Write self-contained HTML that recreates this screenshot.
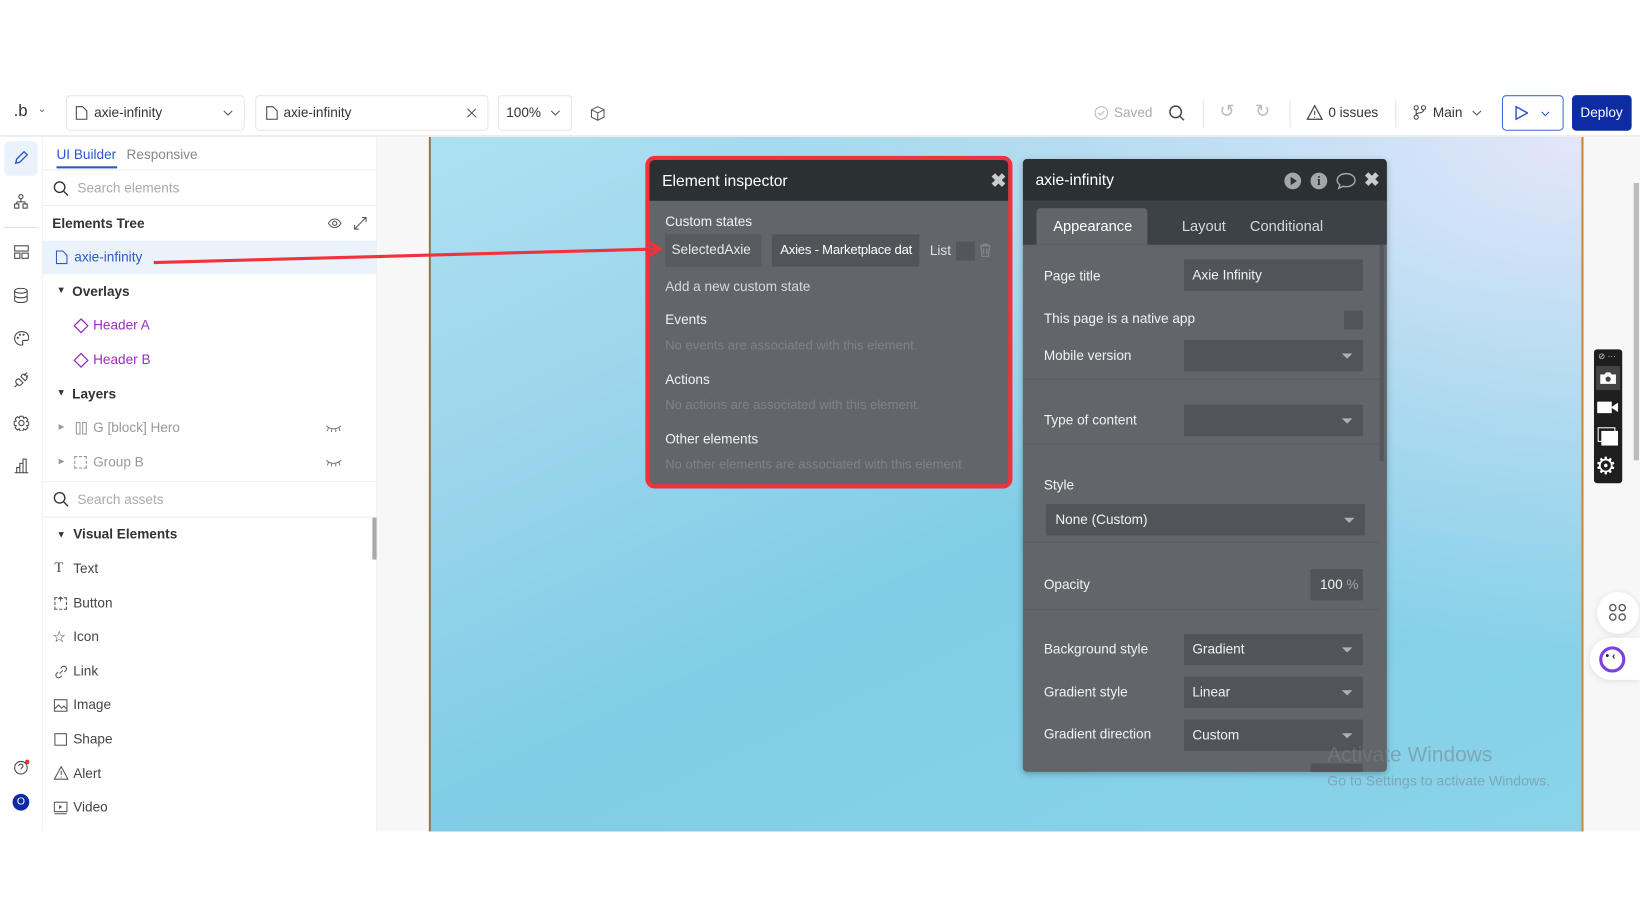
<!DOCTYPE html>
<html><head><meta charset="utf-8"><style>
*{box-sizing:border-box;margin:0;padding:0}
html,body{width:1640px;height:924px;overflow:hidden;background:#fff;font-family:"Liberation Sans",sans-serif}
#w{position:absolute;left:0;top:0;width:1568px;height:883px;transform:scale(1.04592);transform-origin:0 0}
.a{position:absolute}
.t{position:absolute;white-space:nowrap}
.ic{position:absolute}
.box{position:absolute;border:1px solid #e6e6e6;border-radius:4px;background:#fff}
.lbl{position:absolute;font-size:13px;color:#f2f2f2;white-space:nowrap}
.fld{position:absolute;background:#51555a;color:#f2f2f2;font-size:13px;padding-left:8px;line-height:30px;white-space:nowrap}
.dd:after{content:"";position:absolute;right:10px;top:13px;border:5px solid transparent;border-top:5px solid #aeb1b4;border-bottom:0}
.sep{position:absolute;left:0;width:340px;height:1px;background:#585c60}
.side{font-size:13px;color:#444}
</style></head><body><div id="w">
<!-- toolbar -->
<div class="t" style="left:13px;top:98px;font-size:16px;color:#333">.b</div>
<div class="t" style="left:36px;top:99px;font-size:10px;color:#666">⌄</div>
<div class="box" style="left:63px;top:91px;width:171px;height:34px"></div>
<svg class="ic" style="left:72px;top:101px" width="12" height="14" viewBox="0 0 12 14"><path d="M1 1h6l4 4v8H1z" fill="none" stroke="#444"/></svg>
<div class="t" style="left:90px;top:100px;font-size:13px;color:#333">axie-infinity</div>
<svg class="ic" style="left:213px;top:105px" width="10" height="6"><path d="M1 1l4 4 4-4" fill="none" stroke="#555"/></svg>
<div class="box" style="left:244px;top:91px;width:223px;height:34px"></div>
<svg class="ic" style="left:254px;top:101px" width="12" height="14" viewBox="0 0 12 14"><path d="M1 1h6l4 4v8H1z" fill="none" stroke="#444"/></svg>
<div class="t" style="left:271px;top:100px;font-size:13px;color:#333">axie-infinity</div>
<svg class="ic" style="left:446px;top:103px" width="10" height="10"><path d="M1 1l8 8M9 1l-8 8" stroke="#555"/></svg>
<div class="box" style="left:476px;top:91px;width:71px;height:34px"></div>
<div class="t" style="left:484px;top:100px;font-size:13px;color:#333">100%</div>
<svg class="ic" style="left:526px;top:105px" width="10" height="6"><path d="M1 1l4 4 4-4" fill="none" stroke="#555"/></svg>
<svg class="ic" style="left:564px;top:101px" width="15" height="15" viewBox="0 0 15 15"><path d="M7.5 1l6 3v7l-6 3-6-3V4zM1.5 4l6 3 6-3M7.5 7v7" fill="none" stroke="#555"/></svg>
<svg class="ic" style="left:1046px;top:101px" width="14" height="14"><circle cx="7" cy="7" r="6" fill="none" stroke="#bbb"/><path d="M4 7l2 2 4-4" fill="none" stroke="#bbb"/></svg>
<div class="t" style="left:1065px;top:100px;font-size:13px;color:#aaa">Saved</div>
<svg class="ic" style="left:1117px;top:100px" width="16" height="16"><circle cx="7" cy="7" r="5.5" fill="none" stroke="#444" stroke-width="1.4"/><path d="M11 11l4 4" stroke="#444" stroke-width="1.4"/></svg>
<div class="a" style="left:1150px;top:96px;width:1px;height:26px;background:#e4e4e4"></div>
<div class="t" style="left:1166px;top:97px;font-size:17px;color:#bbb">↺</div>
<div class="t" style="left:1200px;top:97px;font-size:17px;color:#bbb">↻</div>
<div class="a" style="left:1233px;top:96px;width:1px;height:26px;background:#e4e4e4"></div>
<svg class="ic" style="left:1249px;top:100px" width="16" height="15"><path d="M8 1l7 13H1z" fill="none" stroke="#444" stroke-width="1.2"/><path d="M8 6v4M8 11.5v1" stroke="#444"/></svg>
<div class="t" style="left:1270px;top:100px;font-size:13px;color:#333">0 issues</div>
<div class="a" style="left:1334px;top:96px;width:1px;height:26px;background:#e4e4e4"></div>
<svg class="ic" style="left:1351px;top:100px" width="13" height="15"><circle cx="3" cy="3" r="2" fill="none" stroke="#444"/><circle cx="3" cy="12" r="2" fill="none" stroke="#444"/><circle cx="10" cy="3" r="2" fill="none" stroke="#444"/><path d="M3 5v5M10 5c0 4-7 2-7 5" fill="none" stroke="#444"/></svg>
<div class="t" style="left:1370px;top:100px;font-size:13px;color:#333">Main</div>
<svg class="ic" style="left:1407px;top:105px" width="10" height="6"><path d="M1 1l4 4 4-4" fill="none" stroke="#555"/></svg>
<div class="a" style="left:1436px;top:91px;width:59px;height:34px;border:1.5px solid #3d6bdb;border-radius:4px"></div>
<svg class="ic" style="left:1448px;top:101px" width="13" height="14"><path d="M1.5 1l11 6-11 6z" fill="none" stroke="#2d56c8" stroke-width="1.4"/></svg>
<svg class="ic" style="left:1473px;top:106px" width="9" height="6"><path d="M1 1l3.5 3.5L8 1" fill="none" stroke="#2d56c8"/></svg>
<div class="a" style="left:1503px;top:91px;width:57px;height:34px;background:#0d2ca4;border-radius:4px"></div>
<div class="t" style="left:1511px;top:100px;font-size:13px;color:#fff">Deploy</div>
<div class="a" style="left:0;top:129px;width:1568px;height:2px;background:#eee"></div>

<!-- left rail -->
<div class="a" style="left:0;top:131px;width:41px;height:664px;background:#fff;border-right:1px solid #eee"></div>
<div class="a" style="left:4px;top:135px;width:32px;height:33px;background:#eaf2fc;border-radius:5px"></div>
<svg class="ic" style="left:13px;top:144px" width="14" height="14"><path d="M2 12l1-4 7-7 3 3-7 7z" fill="none" stroke="#2d56c8" stroke-width="1.3"/></svg>
<svg class="ic" style="left:13px;top:185px" width="14" height="15"><circle cx="7" cy="3" r="2" fill="none" stroke="#444"/><path d="M7 5v3M3 8h8M3 8v2M11 8v2" stroke="#444" fill="none"/><rect x="1" y="10" width="4" height="4" fill="none" stroke="#444"/><rect x="9" y="10" width="4" height="4" fill="none" stroke="#444"/></svg>
<div class="a" style="left:4px;top:217px;width:32px;height:1px;background:#ddd"></div>
<svg class="ic" style="left:13px;top:234px" width="15" height="14"><rect x="1" y="1" width="13" height="5" fill="none" stroke="#444"/><rect x="1" y="8" width="5" height="5" fill="none" stroke="#444"/><rect x="8" y="8" width="6" height="5" fill="none" stroke="#444"/></svg>
<svg class="ic" style="left:13px;top:275px" width="14" height="15"><ellipse cx="7" cy="3" rx="6" ry="2.3" fill="none" stroke="#444"/><path d="M1 3v9c0 3 12 3 12 0V3M1 7.5c0 3 12 3 12 0" fill="none" stroke="#444"/></svg>
<svg class="ic" style="left:13px;top:316px" width="15" height="15"><path d="M7.5 1a6.5 6.5 0 100 13c1.5 0 1.5-1.5 1-2.5s0-2 1.5-2H12c1.5 0 2.5-1 2.5-2.5C14.5 3.5 11.5 1 7.5 1z" fill="none" stroke="#444"/><circle cx="4" cy="7" r="1" fill="#444"/><circle cx="6" cy="4" r="1" fill="#444"/><circle cx="9.5" cy="4" r="1" fill="#444"/></svg>
<svg class="ic" style="left:13px;top:356px" width="15" height="15"><path d="M1 14l3-3M5 6l4 4-2 2c-1.5 1-3 0-4-1s-1.5-2.5 0-4zM7 4l4 4 1.5-1.5c1-1.5 0-3-1-4S9 1.5 8 2.5zM10 3l3-3M12 5l2-2" fill="none" stroke="#444"/></svg>
<svg class="ic" style="left:13px;top:397px" width="15" height="15"><circle cx="7.5" cy="7.5" r="2.5" fill="none" stroke="#444"/><path d="M6 1h3l.5 2 2-1 2 2-1 2 2 .5v3l-2 .5 1 2-2 2-2-1-.5 2H6l-.5-2-2 1-2-2 1-2-2-.5V6l2-.5-1-2 2-2 2 1z" fill="none" stroke="#444"/></svg>
<svg class="ic" style="left:13px;top:438px" width="15" height="15"><path d="M1 14h13M3 14V9h3v5M6 14V5h3v9M9 14V1h3v13" fill="none" stroke="#444"/></svg>
<svg class="ic" style="left:13px;top:726px" width="16" height="16"><circle cx="7" cy="8" r="6" fill="none" stroke="#444"/><path d="M5 6.5a2 2 0 114 0c0 1.2-2 1.5-2 3M7 11v.5" fill="none" stroke="#444"/><circle cx="13" cy="2.5" r="2.2" fill="#e53030"/></svg>
<div class="a" style="left:12px;top:759px;width:16px;height:16px;border-radius:50%;background:#0d2ca4;color:#fff;font-size:10px;text-align:center;line-height:16px">O</div>

<!-- sidebar -->
<div class="a" style="left:41px;top:131px;width:320px;height:664px;background:#fff;border-right:1px solid #e8e8e8"></div>
<div class="t" style="left:54px;top:140px;font-size:13px;color:#2d56c8">UI Builder</div>
<div class="a" style="left:54px;top:159px;width:58px;height:2px;background:#2d56c8"></div>
<div class="t" style="left:121px;top:140px;font-size:13px;color:#888">Responsive</div>
<div class="a" style="left:41px;top:162px;width:320px;height:1px;background:#eee"></div>
<svg class="ic" style="left:51px;top:173px" width="15" height="15"><circle cx="6" cy="6" r="5" fill="none" stroke="#333" stroke-width="1.3"/><path d="M10 10l4 4" stroke="#333" stroke-width="1.3"/></svg>
<div class="t" style="left:74px;top:172px;font-size:13px;color:#aaa">Search elements</div>
<div class="a" style="left:41px;top:196px;width:320px;height:1px;background:#eee"></div>
<div class="t" style="left:50px;top:206px;font-size:13px;color:#333;font-weight:bold">Elements Tree</div>
<svg class="ic" style="left:313px;top:208px" width="14" height="11"><path d="M1 5.5C4 0 10 0 13 5.5 10 11 4 11 1 5.5z" fill="none" stroke="#555"/><circle cx="7" cy="5.5" r="2" fill="none" stroke="#555"/></svg>
<svg class="ic" style="left:338px;top:207px" width="13" height="13"><path d="M1 12l11-11M8 1h4v4M1 8v4h4" fill="none" stroke="#555"/></svg>
<div class="a" style="left:41px;top:230px;width:320px;height:32px;background:#eaf2fc"></div>
<svg class="ic" style="left:53px;top:239px" width="12" height="14" viewBox="0 0 12 14"><path d="M1 1h6l4 4v8H1z" fill="none" stroke="#2d56c8"/></svg>
<div class="t" style="left:71px;top:238px;font-size:13px;color:#2d56c8">axie-infinity</div>
<div class="t" style="left:54px;top:272px;font-size:9px;color:#333">▼</div>
<div class="t" style="left:69px;top:271px;font-size:13px;color:#333;font-weight:bold">Overlays</div>
<svg class="ic" style="left:70px;top:304px" width="15" height="15"><path d="M7.5 1l6.5 6.5-6.5 6.5L1 7.5z" fill="none" stroke="#9c2bbf" stroke-width="1.2"/></svg>
<div class="t" style="left:89px;top:303px;font-size:13px;color:#9c2bbf">Header A</div>
<svg class="ic" style="left:70px;top:337px" width="15" height="15"><path d="M7.5 1l6.5 6.5-6.5 6.5L1 7.5z" fill="none" stroke="#9c2bbf" stroke-width="1.2"/></svg>
<div class="t" style="left:89px;top:336px;font-size:13px;color:#9c2bbf">Header B</div>
<div class="t" style="left:54px;top:370px;font-size:9px;color:#333">▼</div>
<div class="t" style="left:69px;top:369px;font-size:13px;color:#333;font-weight:bold">Layers</div>
<div class="t" style="left:56px;top:404px;font-size:7px;color:#999">▶</div>
<svg class="ic" style="left:72px;top:403px" width="12" height="13"><rect x="1" y="1" width="3.5" height="11" fill="none" stroke="#999"/><rect x="7" y="1" width="3.5" height="11" fill="none" stroke="#999"/></svg>
<div class="t" style="left:89px;top:401px;font-size:13px;color:#999">G [block] Hero</div>
<svg class="ic" style="left:311px;top:405px" width="16" height="8"><path d="M1 2c4 4 10 4 14 0M3 4l-1 3M6 5.5v2.5M10 5.5v2.5M13 4l1 3" fill="none" stroke="#777"/></svg>
<div class="t" style="left:56px;top:437px;font-size:7px;color:#999">▶</div>
<div class="a" style="left:71px;top:436px;width:12px;height:12px;border:1px dashed #999"></div>
<div class="t" style="left:89px;top:434px;font-size:13px;color:#999">Group B</div>
<svg class="ic" style="left:311px;top:438px" width="16" height="8"><path d="M1 2c4 4 10 4 14 0M3 4l-1 3M6 5.5v2.5M10 5.5v2.5M13 4l1 3" fill="none" stroke="#777"/></svg>
<div class="a" style="left:41px;top:460px;width:320px;height:1px;background:#eee"></div>
<svg class="ic" style="left:51px;top:470px" width="15" height="15"><circle cx="6" cy="6" r="5" fill="none" stroke="#333" stroke-width="1.3"/><path d="M10 10l4 4" stroke="#333" stroke-width="1.3"/></svg>
<div class="t" style="left:74px;top:470px;font-size:13px;color:#aaa">Search assets</div>
<div class="a" style="left:41px;top:494px;width:320px;height:1px;background:#eee"></div>
<div class="a" style="left:356px;top:495px;width:4px;height:40px;background:#aaa"></div>
<div class="t" style="left:54px;top:506px;font-size:9px;color:#333">▼</div>
<div class="t" style="left:70px;top:503px;font-size:13px;color:#333;font-weight:bold">Visual Elements</div>
<div class="t side" style="left:52px;top:536px;font-family:'Liberation Serif',serif;font-size:14px">T</div><div class="t side" style="left:70px;top:536px">Text</div>
<div class="a" style="left:52px;top:571px;width:12px;height:12px;border:1px dashed #555"></div><div class="t side" style="left:55px;top:568px;font-size:10px">+</div><div class="t side" style="left:70px;top:569px">Button</div>
<div class="t side" style="left:50px;top:600px;font-size:15px">☆</div><div class="t side" style="left:70px;top:601px">Icon</div>
<svg class="ic" style="left:52px;top:636px" width="13" height="13"><path d="M5 8l3-3M6 3l1.5-1.5a2.5 2.5 0 013.5 3.5L9.5 6.5M7 10l-1.5 1.5a2.5 2.5 0 01-3.5-3.5L3.5 6.5" fill="none" stroke="#555"/></svg><div class="t side" style="left:70px;top:634px">Link</div>
<svg class="ic" style="left:51px;top:668px" width="14" height="13"><rect x="1" y="1" width="12" height="11" fill="none" stroke="#555"/><path d="M1 10l4-4 3 3 2-2 3 3" fill="none" stroke="#555"/></svg><div class="t side" style="left:70px;top:666px">Image</div>
<div class="a" style="left:52px;top:701px;width:12px;height:12px;border:1px solid #555"></div><div class="t side" style="left:70px;top:699px">Shape</div>
<svg class="ic" style="left:51px;top:732px" width="15" height="14"><path d="M7.5 1l6.5 12H1z" fill="none" stroke="#555"/><path d="M7.5 5v4M7.5 10.5v1" stroke="#555"/></svg><div class="t side" style="left:70px;top:732px">Alert</div>
<svg class="ic" style="left:51px;top:766px" width="14" height="13"><rect x="1" y="1" width="12" height="9" fill="none" stroke="#555"/><path d="M5.5 3.5l3 2-3 2z" fill="#555"/><path d="M1 12h12" stroke="#555"/></svg><div class="t side" style="left:70px;top:764px">Video</div>

<!-- canvas area -->
<div class="a" style="left:362px;top:131px;width:1206px;height:664px;background:#f7f7f7"></div>
<div class="a" style="left:410px;top:131px;width:1104px;height:664px;background:radial-gradient(ellipse 70% 75% at 100% 0%,rgba(228,230,250,1) 0%,rgba(214,228,248,.7) 40%,rgba(190,225,245,0) 100%),linear-gradient(155deg,#aee0f2 0%,#9ed6ec 25%,#7fcde6 55%,#8ad4ea 100%);border-left:2px solid #8a7a5a;border-right:2px solid #c58a3a"></div>
<div class="a" style="left:1562px;top:175px;width:5px;height:265px;background:#bbb"></div>
<!-- float toolbar -->
<div class="a" style="left:1524px;top:334px;width:27px;height:128px;background:#1e1e1e;border-radius:3px"></div>
<div class="a" style="left:1526px;top:350px;width:23px;height:23px;background:#444"></div>
<svg class="ic" style="left:1529px;top:355px" width="17" height="13"><path d="M1 3h4l1.5-2h4L12 3h4v9H1z" fill="#fff"/><circle cx="8.5" cy="7.5" r="2.5" fill="#444"/></svg>
<svg class="ic" style="left:1527px;top:383px" width="21" height="13"><rect x="0" y="1" width="14" height="11" fill="#fff"/><path d="M14 6l6-4v9l-6-4z" fill="#fff"/></svg>
<svg class="ic" style="left:1527px;top:408px" width="21" height="19"><rect x="1" y="1" width="16" height="13" fill="none" stroke="#fff"/><rect x="4" y="4" width="16" height="14" fill="#fff"/></svg>
<div class="t" style="left:1525px;top:432px;font-size:23px;color:#fff">⚙</div>
<div class="t" style="left:1528px;top:336px;font-size:8px;color:#ccc">⊘ ···</div>
<div class="a" style="left:1527px;top:566px;width:40px;height:40px;border-radius:50%;background:#fff;box-shadow:0 1px 6px rgba(0,0,0,.1)"></div>
<svg class="ic" style="left:1538px;top:577px" width="17" height="17"><g fill="none" stroke="#555" stroke-width="1.3"><rect x="1" y="1" width="6" height="6" rx="3"/><rect x="10" y="1" width="6" height="6" rx="3"/><rect x="1" y="10" width="6" height="6" rx="3"/><rect x="10" y="10" width="6" height="6" rx="3"/></g></svg>
<div class="a" style="left:1520px;top:610px;width:48px;height:40px;border-radius:20px 0 0 20px;background:#fff;box-shadow:0 1px 6px rgba(0,0,0,.1)"></div>
<div class="a" style="left:1529px;top:618px;width:25px;height:25px;border-radius:50%;border:3px solid #7b3fe4;background:#fff"></div>
<div class="t" style="left:1535px;top:622px;font-size:10px;color:#1a1a40;font-weight:bold">• ‹</div>

<!-- element inspector -->
<div class="a" style="left:617px;top:149px;width:351px;height:318px;border:4px solid #f0323a;border-radius:9px;background:#62666a;overflow:hidden">
 <div class="a" style="left:0;top:0;width:343px;height:39px;background:#2b3033"></div>
 <div class="t" style="left:12px;top:12px;font-size:15px;color:#fff">Element inspector</div>
 <div class="t" style="left:326px;top:10px;font-size:18px;color:#c9cbcd;font-weight:bold">✖</div>
 <div class="t" style="left:15px;top:51px;font-size:13px;color:#f2f2f2">Custom states</div>
 <div class="a" style="left:15px;top:71px;width:92px;height:31px;background:#575b60"></div>
 <div class="t" style="left:21px;top:78px;font-size:13px;color:#e8e8e8">SelectedAxie</div>
 <div class="a" style="left:117px;top:71px;width:141px;height:31px;background:#51555a;overflow:hidden"><div class="t" style="left:8px;top:8px;font-size:12.5px;color:#fff;letter-spacing:-.2px">Axies - Marketplace dat</div></div>
 <div class="t" style="left:268px;top:79px;font-size:13px;color:#e0e0e0">List</div>
 <div class="a" style="left:293px;top:78px;width:18px;height:18px;background:#53575b"></div>
 <svg class="ic" style="left:315px;top:79px" width="12" height="14"><path d="M1 3h10M4 3V1.5h4V3M2 3.5l.8 9.5h6.4l.8-9.5M4.5 5.5v5.5M7.5 5.5v5.5" fill="none" stroke="#8a8d90"/></svg>
 <div class="t" style="left:15px;top:113px;font-size:13px;color:#d8d8d8">Add a new custom state</div>
 <div class="t" style="left:15px;top:145px;font-size:13px;color:#f2f2f2">Events</div>
 <div class="t" style="left:15px;top:170px;font-size:12.5px;color:#7f8387">No events are associated with this element.</div>
 <div class="t" style="left:15px;top:202px;font-size:13px;color:#f2f2f2">Actions</div>
 <div class="t" style="left:15px;top:227px;font-size:12.5px;color:#7f8387">No actions are associated with this element.</div>
 <div class="t" style="left:15px;top:259px;font-size:13px;color:#f2f2f2">Other elements</div>
 <div class="t" style="left:15px;top:284px;font-size:12.5px;color:#7f8387">No other elements are associated with this element.</div>
</div>
<!-- arrow -->
<svg class="a" style="left:140px;top:225px" width="500" height="35"><path d="M7 26L490 13" stroke="#f0323a" stroke-width="3"/><path d="M480 6l11 7-11 7" fill="none" stroke="#f0323a" stroke-width="3"/></svg>

<!-- property editor -->
<div class="a" style="left:978px;top:152px;width:348px;height:586px;background:#62666a;border-radius:4px;overflow:hidden;box-shadow:0 2px 6px rgba(0,0,0,.25)">
 <div class="a" style="left:0;top:0;width:348px;height:40px;background:#2b3033"></div>
 <div class="t" style="left:12px;top:12px;font-size:15px;color:#fff">axie-infinity</div>
 <div class="a" style="left:250px;top:13px;width:16px;height:16px;border-radius:50%;background:#a3a7aa"></div><div class="a" style="left:256px;top:17px;border-left:6px solid #2b3033;border-top:4px solid transparent;border-bottom:4px solid transparent"></div>
 <div class="a" style="left:275px;top:13px;width:16px;height:16px;border-radius:50%;background:#a3a7aa;color:#2b3033;font-size:12px;font-weight:bold;text-align:center;line-height:16px;font-family:'Liberation Serif',serif">i</div>
 <svg class="ic" style="left:299px;top:12px" width="20" height="18"><path d="M10 2c5 0 8.5 2.8 8.5 6.3S15 14.5 10 14.5c-1 0-2-.1-3-.4L3 16l1-3.3C2.5 11.5 1.5 10 1.5 8.3 1.5 4.8 5 2 10 2z" fill="none" stroke="#a3a7aa" stroke-width="1.4"/></svg>
 <div class="t" style="left:326px;top:10px;font-size:18px;color:#c9cbcd;font-weight:bold">✖</div>
 <div class="a" style="left:0;top:40px;width:348px;height:42px;background:#3d4246"></div>
 <div class="a" style="left:13px;top:47px;width:106px;height:35px;background:#62666a;border-radius:4px 4px 0 0"></div>
 <div class="t" style="left:29px;top:56px;font-size:14px;color:#fff">Appearance</div>
 <div class="t" style="left:152px;top:56px;font-size:14px;color:#d8d8d8">Layout</div>
 <div class="t" style="left:217px;top:56px;font-size:14px;color:#d8d8d8">Conditional</div>
 <div class="a" style="left:341px;top:82px;width:4px;height:207px;background:#54585c"></div>
 <div class="lbl" style="left:20px;top:104px">Page title</div>
 <div class="fld" style="left:154px;top:96px;width:171px;height:30px">Axie Infinity</div>
 <div class="lbl" style="left:20px;top:145px">This page is a native app</div>
 <div class="a" style="left:307px;top:145px;width:18px;height:18px;background:#51555a"></div>
 <div class="lbl" style="left:20px;top:180px">Mobile version</div>
 <div class="fld dd" style="left:154px;top:173px;width:171px;height:30px"></div>
 <div class="sep" style="top:210px"></div>
 <div class="lbl" style="left:20px;top:242px">Type of content</div>
 <div class="fld dd" style="left:154px;top:235px;width:171px;height:30px"></div>
 <div class="sep" style="top:272px"></div>
 <div class="lbl" style="left:20px;top:304px">Style</div>
 <div class="fld dd" style="left:22px;top:330px;width:305px;height:30px;padding-left:9px">None (Custom)</div>
 <div class="sep" style="top:366px"></div>
 <div class="lbl" style="left:20px;top:399px">Opacity</div>
 <div class="fld" style="left:275px;top:392px;width:50px;height:30px;padding-left:9px">100 <span style="color:#a0a3a6">%</span></div>
 <div class="sep" style="top:430px"></div>
 <div class="lbl" style="left:20px;top:461px">Background style</div>
 <div class="fld dd" style="left:154px;top:454px;width:171px;height:30px">Gradient</div>
 <div class="lbl" style="left:20px;top:502px">Gradient style</div>
 <div class="fld dd" style="left:154px;top:495px;width:171px;height:30px">Linear</div>
 <div class="lbl" style="left:20px;top:542px">Gradient direction</div>
 <div class="fld dd" style="left:154px;top:536px;width:171px;height:30px">Custom</div>
 <div class="a" style="left:275px;top:578px;width:50px;height:10px;background:#51555a"></div>
</div>
<div class="t" style="left:1269px;top:711px;font-size:20px;color:rgba(120,130,140,.55)">Activate Windows</div>
<div class="t" style="left:1269px;top:739px;font-size:13.5px;color:rgba(120,130,140,.55)">Go to Settings to activate Windows.</div>
</div></body></html>
